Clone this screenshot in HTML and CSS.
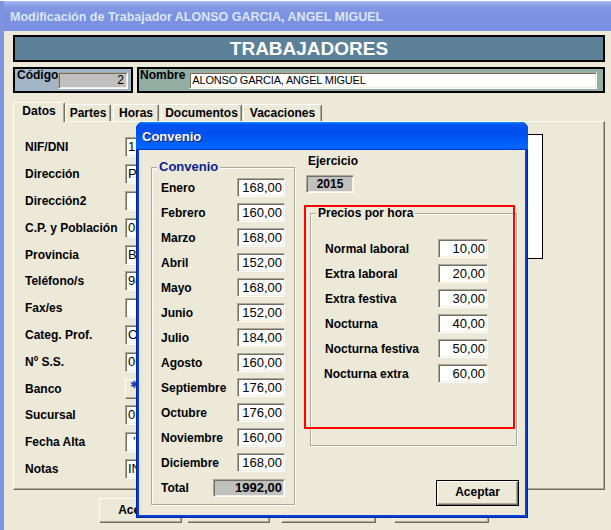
FILE: index.html
```html
<!DOCTYPE html>
<html lang="es">
<head>
<meta charset="utf-8">
<title>Modificación de Trabajador</title>
<link rel="stylesheet" href="styles.css">
</head>
<body>
<div class="win">
  <div class="wtitle">Modificación de Trabajador ALONSO GARCIA, ANGEL MIGUEL</div>
  <div class="client">
    <div class="banner">TRABAJADORES</div>
    <div class="idrow">
      <div class="codbox"><span class="lbl">Código</span><div class="fld codfld">2</div></div>
      <div class="nombox"><span class="lbl">Nombre</span><div class="fld namefld">ALONSO GARCIA, ANGEL MIGUEL</div></div>
    </div>
    <div class="tabs">
      <div class="tab sel t1">Datos</div>
      <div class="tab t2">Partes</div>
      <div class="tab t3">Horas</div>
      <div class="tab t4">Documentos</div>
      <div class="tab t5">Vacaciones</div>
    </div>
    <div class="panel">
      <div class="form">
        <span class="flbl">NIF/DNI</span><div class="fld ffld">12</div>
        <span class="flbl">Dirección</span><div class="fld ffld">P</div>
        <span class="flbl">Dirección2</span><div class="fld ffld"></div>
        <span class="flbl">C.P. y Población</span><div class="fld ffld">05</div>
        <span class="flbl">Provincia</span><div class="fld ffld">B</div>
        <span class="flbl">Teléfono/s</span><div class="fld ffld">94</div>
        <span class="flbl">Fax/es</span><div class="fld ffld"></div>
        <span class="flbl">Categ. Prof.</span><div class="fld ffld">O</div>
        <span class="flbl">Nº S.S.</span><div class="fld ffld">05</div>
        <span class="flbl">Banco</span><div class="fld ffld bank"><span class="bankico">✱</span></div>
        <span class="flbl">Sucursal</span><div class="fld ffld">0</div>
        <span class="flbl">Fecha Alta</span><div class="fld ffld"><span class="tick">'</span></div>
        <span class="flbl">Notas</span><div class="fld ffld">IN</div>
      </div>
      <div class="photo"></div>
    </div>
    <div class="btnrow">
      <div class="btn b1">Aceptar</div>
      <div class="btn b2"></div>
      <div class="btn b3"></div>
      <div class="btn b4"></div>
    </div>
  </div>
</div>

<div class="dlg">
  <div class="dtitle">Convenio</div>
  <div class="dbody">
    <div class="grp conv">
      <span class="legend navy">Convenio</span>
      <div class="mrow"><span>Enero</span><div class="fld mfld">168,00</div></div>
      <div class="mrow"><span>Febrero</span><div class="fld mfld">160,00</div></div>
      <div class="mrow"><span>Marzo</span><div class="fld mfld">168,00</div></div>
      <div class="mrow"><span>Abril</span><div class="fld mfld">152,00</div></div>
      <div class="mrow"><span>Mayo</span><div class="fld mfld">168,00</div></div>
      <div class="mrow"><span>Junio</span><div class="fld mfld">152,00</div></div>
      <div class="mrow"><span>Julio</span><div class="fld mfld">184,00</div></div>
      <div class="mrow"><span>Agosto</span><div class="fld mfld">160,00</div></div>
      <div class="mrow"><span>Septiembre</span><div class="fld mfld">176,00</div></div>
      <div class="mrow"><span>Octubre</span><div class="fld mfld">176,00</div></div>
      <div class="mrow"><span>Noviembre</span><div class="fld mfld">160,00</div></div>
      <div class="mrow"><span>Diciembre</span><div class="fld mfld">168,00</div></div>
      <div class="mrow"><span>Total</span><div class="fld totfld">1992,00</div></div>
    </div>
    <div class="rcol">
      <span class="ejlbl">Ejercicio</span>
      <div class="fld ejfld">2015</div>
      <div class="grp precios">
        <span class="legend">Precios por hora</span>
        <div class="prow"><span>Normal laboral</span><div class="fld pfld">10,00</div></div>
        <div class="prow"><span>Extra laboral</span><div class="fld pfld">20,00</div></div>
        <div class="prow"><span>Extra festiva</span><div class="fld pfld">30,00</div></div>
        <div class="prow"><span>Nocturna</span><div class="fld pfld">40,00</div></div>
        <div class="prow"><span>Nocturna festiva</span><div class="fld pfld">50,00</div></div>
        <div class="prow"><span class="nx">Nocturna extra</span><div class="fld pfld">60,00</div></div>
      </div>
      <div class="defbtn">Aceptar</div>
    </div>
  </div>
  <div class="redmark"></div>
</div>
</body>
</html>
```
FILE: styles.css
```css
* { box-sizing: border-box; }
body {
  margin: 0;
  width: 611px;
  height: 530px;
  overflow: hidden;
  position: relative;
  background: #fff;
  font-family: "Liberation Sans", Arial, sans-serif;
  font-size: 12px;
  color: #000;
}
.win {
  margin-top: 1px;
  height: 529px;
  border-left: 4px solid #7D93E0;
  background: #ECE9D8;
}
.wtitle {
  height: 30px;
  padding: 3px 0 0 6px;
  line-height: 27px;
  font-weight: bold;
  font-size: 12.5px;
  color: #DCE5F8;
  white-space: nowrap;
  background: linear-gradient(to bottom, #B3C3F3 0px, #97ACEC 2px, #8399E6 6px, #7B91E2 50%, #7C90E2 100%);
}
.client { padding: 4px 0 0 9px; }
.banner {
  width: 592px;
  height: 27px;
  border: 2px solid #000;
  background: #5B8098;
  color: #fff;
  font-weight: bold;
  font-size: 19px;
  line-height: 23px;
  text-align: center;
}
.idrow {
  display: flex;
  gap: 4px;
  margin-top: 5px;
  width: 592px;
  height: 26px;
}
.codbox, .nombox {
  border: 2px solid #000;
  display: flex;
  align-items: flex-start;
  padding: 0 3px 0 2px;
}
.codbox { width: 120px; background: #A3B6C8; }
.nombox { flex: 1; background: #93AFA4; padding-left: 1px; }
.lbl { font-weight: bold; font-size: 12px; line-height: 13px; }

.fld {
  height: 19px;
  background: #fff;
  border: 1px solid;
  border-color: #ACA899 #fff #fff #ACA899;
  box-shadow: inset 1px 1px 0 #716F64, inset -1px -1px 0 #F1EFE2;
  font-size: 13px;
  font-weight: normal;
  line-height: 17px;
  padding: 0 3px;
  white-space: nowrap;
  overflow: hidden;
}
.codfld {
  margin: 3px 0 0 auto;
  width: 70px;
  height: 17px;
  line-height: 15px;
  background: #C0C0C0;
  text-align: right;
  font-size: 12px;
}
.namefld {
  flex: 1;
  margin: 3px 3px 0 4px;
  height: 17px;
  line-height: 15px;
  font-size: 11px;
  letter-spacing: -0.2px;
  padding-left: 2px;
}

.tabs {
  display: flex;
  align-items: flex-end;
  margin-top: 9px;
  height: 19px;
}
.tab {
  height: 17px;
  background: #ECE9D8;
  border-top: 1px solid #fff;
  border-left: 1px solid #fff;
  border-right: 1px solid #716F64;
  box-shadow: inset -1px 0 0 #ACA899;
  border-radius: 2px 2px 0 0;
  font-weight: bold;
  font-size: 12px;
  line-height: 16px;
  text-align: center;
}
.tab.sel {
  height: 20px;
  margin-bottom: -1px;
  position: relative;
  z-index: 1;
  line-height: 17px;
}
.t1 { width: 52px; }
.t2 { width: 46px; margin-left: 0; }
.t3 { width: 46px; margin-left: 2px; }
.t4 { width: 81px; margin-left: 2px; }
.t5 { width: 79px; margin-left: 1px; }

.panel {
  width: 592px;
  height: 369px;
  border-top: 1px solid #fff;
  border-left: 1px solid #fff;
  border-right: 1px solid #716F64;
  border-bottom: 1px solid #716F64;
  box-shadow: inset -1px -1px 0 #ACA899;
  padding: 12px 0 0 11px;
  display: flex;
  align-items: flex-start;
}
.form {
  display: grid;
  grid-template-columns: 100px 200px;
  grid-auto-rows: 26.8px;
  align-items: center;
}
.flbl { font-weight: bold; font-size: 12px; white-space: nowrap; }
.ffld { height: 20px; line-height: 18px; padding-left: 2px; }
.bank { border-color: #fff #716F64 #716F64 #fff; box-shadow: inset -1px -1px 0 #ACA899; background: #ECE9D8; }
.bankico { color: #1D3FB8; font-size: 10px; line-height: 10px; vertical-align: top; margin-left: 2px; }
.tick { margin-left: 5px; }
.photo {
  margin-left: auto;
  margin-right: 61px;
  width: 150px;
  height: 125px;
  background: #fff;
  border: 1px solid #000;
}

.btnrow {
  display: flex;
  margin-top: 8px;
  padding-left: 86px;
}
.btn {
  height: 25px;
  background: #ECE9D8;
  border: 1px solid;
  border-color: #fff #716F64 #716F64 #fff;
  box-shadow: inset -1px -1px 0 #ACA899;
  font-weight: bold;
  font-size: 12px;
  line-height: 22px;
  text-align: center;
}
.b1 { width: 83px; }
.b2 { width: 83px; margin-left: 5px; }
.b3 { width: 95px; margin-left: 11px; }
.b4 { width: 95px; margin-left: 18px; }

/* Dialog window */
.dlg {
  position: absolute;
  left: 136px;
  top: 122px;
  width: 392px;
  height: 396px;
  padding: 0 3px 3px;
  background: #0A40D8;
  border-radius: 7px 7px 0 0;
  box-shadow: inset 0 0 0 1px #0022A6;
  display: flex;
  flex-direction: column;
}
.dtitle {
  height: 28px;
  margin: 0 -3px;
  padding: 2px 0 0 6px;
  border-radius: 7px 7px 0 0;
  background: linear-gradient(180deg, #0997ff, #0053ee 8%, #0050ee 40%, #06f 88%, #06f 93%, #005bff 95%, #003dd7 96%, #003dd7);
  color: #fff;
  font-weight: bold;
  font-size: 13px;
  line-height: 26px;
  text-shadow: 1px 1px 0 #0A1E80;
}
.dbody {
  flex: 1;
  background: #ECE9D8;
  display: flex;
  align-items: flex-start;
  padding-left: 12px;
}
.grp {
  position: relative;
  border: 1px solid #ACA899;
  box-shadow: inset 1px 1px 0 #fff, 1px 1px 0 #fff;
}
.legend {
  position: absolute;
  top: -8px;
  left: 5px;
  padding: 0 2px;
  background: #ECE9D8;
  font-weight: bold;
  font-size: 12px;
  line-height: 14px;
  white-space: nowrap;
}
.navy { color: #0B1F8E; font-size: 13px; }
.conv {
  margin-top: 17px;
  width: 144px;
  padding: 7px 9px 4px 9px;
}
.mrow {
  height: 25px;
  display: flex;
  align-items: center;
  justify-content: space-between;
  font-weight: bold;
  font-size: 12px;
}
.mfld { width: 48px; text-align: right; padding-right: 2px; }
.totfld {
  width: 72px;
  height: 18px;
  line-height: 16px;
  background: #C0C0C0;
  text-align: right;
  font-weight: bold;
  padding-right: 2px;
}
.rcol {
  margin-left: 11px;
  width: 219px;
  padding-top: 4px;
  display: flex;
  flex-direction: column;
  align-items: flex-start;
}
.ejlbl { margin-left: 2px; font-weight: bold; font-size: 12px; line-height: 14px; }
.ejfld {
  margin-top: 7px;
  width: 48px;
  height: 18px;
  line-height: 16px;
  background: #C0C0C0;
  text-align: center;
  font-weight: bold;
  font-size: 12px;
}
.precios {
  margin: 20px 0 0 4px;
  width: 207px;
  padding: 22px 28px 59px 14px;
}
.prow {
  height: 25px;
  display: flex;
  align-items: center;
  justify-content: space-between;
  font-weight: bold;
  font-size: 12px;
}
.nx { margin-left: -1px; }
.pfld { width: 50px; text-align: right; padding-right: 2px; }
.defbtn {
  align-self: flex-end;
  margin: 34px 6px 0 0;
  width: 83px;
  height: 26px;
  border: 1px solid #000;
  background: #ECE9D8;
  box-shadow: inset 1px 1px 0 #fff, inset -1px -1px 0 #716F64, inset -2px -2px 0 #ACA899;
  font-weight: bold;
  font-size: 12px;
  line-height: 23px;
  text-align: center;
}
.redmark {
  position: absolute;
  left: 168px;
  top: 83px;
  width: 211px;
  height: 224px;
  border: 2px solid #f00;
}
```
